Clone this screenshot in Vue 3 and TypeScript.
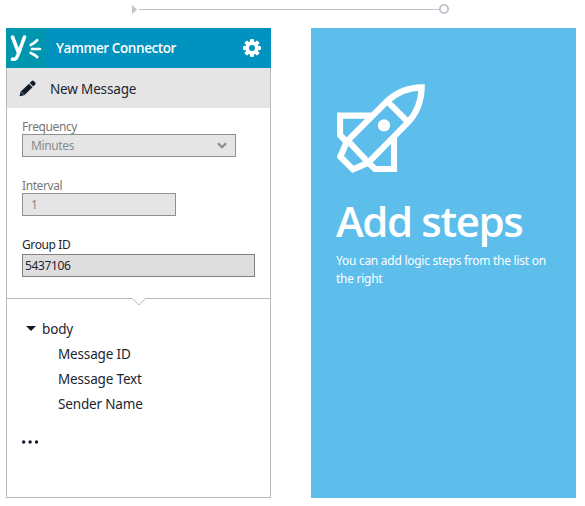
<script setup lang="ts">
interface Field {
  id: string
  label: string
  value: string
  kind: 'select' | 'number' | 'text'
}

const fields: Field[] = [
  { id: 'frequency', label: 'Frequency', value: 'Minutes', kind: 'select' },
  { id: 'interval', label: 'Interval', value: '1', kind: 'number' },
  { id: 'group', label: 'Group ID', value: '5437106', kind: 'text' },
]

const outputs: { id: string; name: string }[] = [
  { id: 'message-id', name: 'Message ID' },
  { id: 'message-text', name: 'Message Text' },
  { id: 'sender-name', name: 'Sender Name' },
]
</script>

<template>
  <main class="designer">
    <svg class="flow-line" width="585" height="28" viewBox="0 0 585 28">
      <path d="M132 5v9l5-4.500z" fill="#bfc2cb" />
      <path d="M139 9.500h300" stroke="#bfc2c8" />
      <circle cx="444" cy="9" r="4.100" fill="#fff" stroke="#bfc2cb" stroke-width="1.900" />
    </svg>

    <div class="steps">
      <section class="card">
        <header class="card-head">
          <svg class="logo" width="39" height="40" viewBox="0 0 39 40">
            <rect width="39" height="40" fill="#0096ae" />
            <g fill="none" stroke="#fff" stroke-linecap="round" stroke-linejoin="round">
              <path d="M6.500 9l6 15.500M18.500 9l-6 16.500c-1.600 4.300-2.700 6.300-6 5.700" stroke-width="3.600" />
              <path d="M24.700 17q3.800-1.800 6.500-4.800M26 21h8M24.700 25q3.800 1.500 6.500 4" stroke-width="2.700" />
            </g>
          </svg>
          <h1 class="card-title">Yammer Connector</h1>
          <svg class="gear" width="18" height="18" viewBox="0 0 18 18">
            <g fill="#fff">
              <rect v-for="a in [0, 45, 90, 135]" :key="a" x="7" y="0" width="4" height="18" rx="1" :transform="`rotate(${a} 9 9)`" />
              <circle cx="9" cy="9" r="6.700" />
            </g>
            <circle cx="9" cy="9" r="3" fill="#0093c0" />
          </svg>
        </header>

        <div class="action">
          <svg class="pencil" width="17" height="17" viewBox="0 0 17 17" fill="#101b28">
            <path d="M0.500 16.300l1.300-4.700L10 3.800l3.500 3.500-8.200 7.900z" />
            <path d="M10.700 3.100l2-2q1.200-1 2.200 0l1.300 1.300q.9 1 0 2l-2 2.200z" />
            <path d="M10.200 3.300l3.900 3.900M2 11.700l3.600 3.600" stroke="#e5e5e5" stroke-width=".45" />
          </svg>
          <span class="action-name">New Message</span>
        </div>

        <div class="fields">
          <div v-for="field in fields" :key="field.id" class="field" :class="field.kind">
            <span class="label">{{ field.label }}</span>
            <div class="control">
              <span class="value">{{ field.value }}</span>
              <svg v-if="field.kind === 'select'" width="10" height="7" viewBox="0 0 10 7">
                <path d="M1 1.200l4 4 4-4" fill="none" stroke="#858b91" stroke-width="2.300" />
              </svg>
            </div>
          </div>
        </div>

        <svg class="divider" width="263" height="8" viewBox="0 0 263 8">
          <path d="M0 .5h125.500l6.500 6.500 6.500-6.500H263" fill="none" stroke="#bababa" />
        </svg>

        <div class="outputs">
          <div class="root">
            <svg width="10" height="5" viewBox="0 0 10 5"><path d="M0 0h10L5 5z" fill="#101b28" /></svg>
            <span>body</span>
          </div>
          <ul class="list">
            <li v-for="output in outputs" :key="output.id">{{ output.name }}</li>
          </ul>
          <svg class="more" width="17" height="4" viewBox="0 0 17 4" fill="#101b28">
            <circle cx="1.700" cy="2" r="1.700" /><circle cx="8.100" cy="2" r="1.700" /><circle cx="14.500" cy="2" r="1.700" />
          </svg>
        </div>
      </section>

      <section class="intro">
        <svg class="rocket" width="88" height="89" viewBox="36 26 264 267" fill="none" stroke="#fff" stroke-width="18.500">
          <path d="M290 36C252 37 214 51 186 78L68 196 130 262 248 142C275 114 289 76 290 36ZM187 78l63 63" />
          <path d="M139 121H45v58l20 21-19 44 38 38 46-20 20 19h57v-96" />
          <circle cx="177" cy="150" r="18.500" fill="#fff" stroke="none" />
        </svg>
        <h2 class="intro-title">Add steps</h2>
        <p class="intro-text">You can add logic steps from the list on<br />the right</p>
      </section>
    </div>
  </main>
</template>

<style>
body {
  margin: 0;
  background: #fff;
}
</style>

<style scoped>
.designer {
  box-sizing: border-box;
  width: 585px;
  height: 506px;
  overflow: hidden;
  background: #fff;
  color: #1b2530;
  font-family: "Noto Sans", "Open Sans", sans-serif;
  font-size: 13.500px;
  letter-spacing: -0.160px;
}

svg {
  display: block;
  flex: none;
}

span {
  white-space: nowrap;
}

.steps {
  display: flex;
  gap: 40px;
  padding-left: 6px;
}

.card,
.intro {
  box-sizing: border-box;
  width: 265px;
  height: 470px;
}

.card {
  border: 1px solid #bababa;
  border-top: 0;
}

.card-head {
  display: flex;
  align-items: center;
  height: 40px;
  margin: 0 -1px;
  background: #0093c0;
  color: #fff;
}

.card-title {
  flex: 1;
  margin: 0 0 0 11px;
  font: 600 13.500px/20px "Open Sans", sans-serif;
  letter-spacing: -0.410px;
}

.gear {
  margin-right: 10px;
}

.action {
  display: flex;
  align-items: center;
  height: 40px;
  padding-left: 12px;
  background: #e5e5e5;
}

.action-name {
  margin-left: 14px;
  padding-top: 2px;
}

.fields {
  height: 190px;
  padding: 17px 15px 0;
  box-sizing: border-box;
}

.field {
  height: 59px;
  color: #777;
}

.label {
  display: block;
  height: 9px;
  font-size: 12px;
  line-height: 4px;
  letter-spacing: -0.400px;
}

.control {
  box-sizing: border-box;
  display: flex;
  align-items: center;
  justify-content: space-between;
  height: 23px;
  padding: 0 8px;
  border: 1px solid #919191;
  background: #e5e5e5;
  color: #8b8b8b;
  font-size: 12px;
  letter-spacing: -0.380px;
}

.select .control {
  width: 214px;
}

.number .control {
  width: 154px;
}

.text {
  color: #1b2530;
}

.text .label {
  height: 11px;
}

.text .control {
  width: 233px;
  padding: 0 2px;
  border-color: #808080;
  background: #dedede;
  color: #1b2530;
}

.outputs {
  padding-left: 15px;
}

.root {
  display: flex;
  align-items: center;
  gap: 6px;
  height: 25px;
  margin-top: 10px;
  padding-left: 4px;
}

.list {
  margin: 0;
  padding: 1px 0 0 36px;
  list-style: none;
}

.list li {
  height: 25px;
  line-height: 25px;
}

.more {
  margin-top: 23px;
}

.intro {
  padding: 56px 25px 0;
  background: #5dbeec;
  color: #fff;
}

.rocket {
  margin-left: 1px;
}

.intro-title {
  margin: 16px 0 0;
  font: 600 42px/64px "Open Sans", sans-serif;
  letter-spacing: -1.400px;
  white-space: nowrap;
}

.intro-text {
  margin: -1px 0 0;
  font-size: 12px;
  line-height: 18px;
  letter-spacing: -0.270px;
  white-space: nowrap;
}
</style>
